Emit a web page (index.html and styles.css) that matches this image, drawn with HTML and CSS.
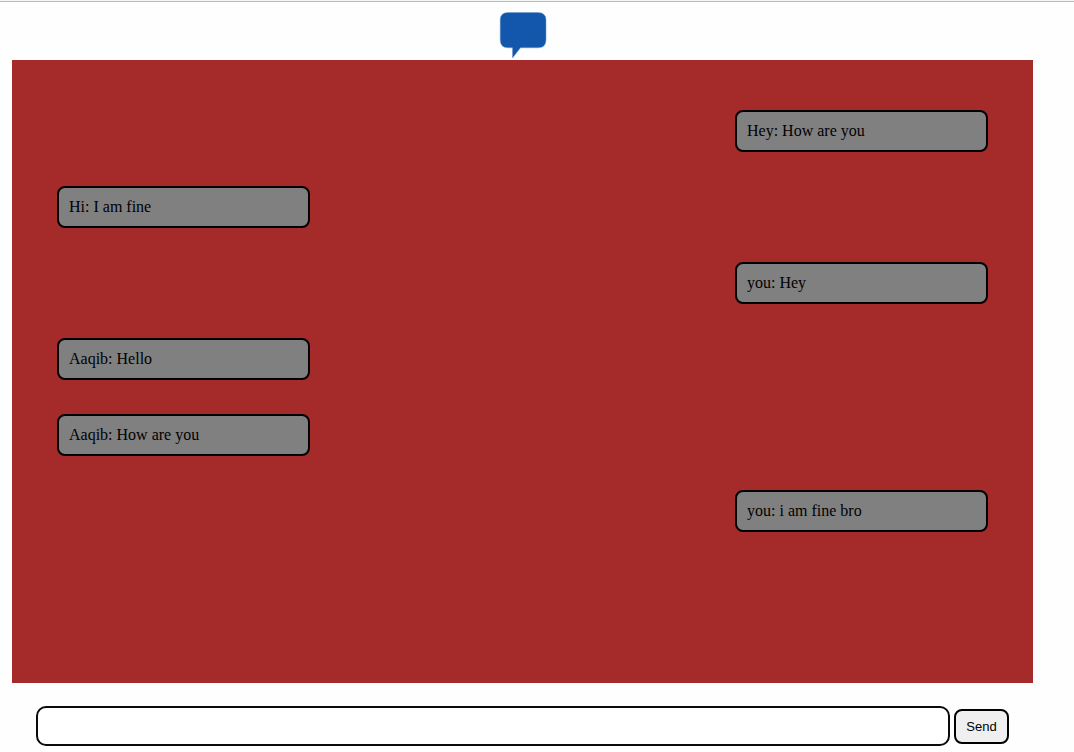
FILE: index.html
```html
<!DOCTYPE html>
<html lang="en">
<head>
<meta charset="utf-8">
<meta name="viewport" content="width=device-width, initial-scale=1">
<title>Chat</title>
<link rel="stylesheet" href="styles.css">
</head>
<body>
<header class="header">
  <svg class="logo" viewBox="0 0 48 48" role="img" aria-label="Chat">
    <path d="M9 2.500H39Q47 2.500 47 10V30Q47 37.800 39 37.800H21.500L13.500 48V37.800H9Q1.200 37.800 1.200 30V10Q1.200 2.500 9 2.500Z" fill="#1257ab" stroke="#6f9bd0" stroke-width=".5"/>
  </svg>
</header>
<main class="chat">
  <div class="message sent">Hey: How are you</div>
  <div class="message">Hi: I am fine</div>
  <div class="message sent">you: Hey</div>
  <div class="message">Aaqib: Hello</div>
  <div class="message">Aaqib: How are you</div>
  <div class="message sent">you: i am fine bro</div>
</main>
<form class="composer">
  <input class="composer-input" type="text" aria-label="Message">
  <button class="send" type="submit">Send</button>
</form>
</body>
</html>
```
FILE: styles.css
```css
* {
  box-sizing: border-box;
}

body {
  display: flex;
  flex-direction: column;
  min-height: 100vh;
  margin: 0;
  border-top: 1px solid #f6f6f6;
  background: #fefefe;
  color: #000;
  font-family: "Liberation Serif", "Times New Roman", serif;
}

.header {
  display: flex;
  justify-content: center;
  height: 59px;
  padding: 8px 41px 0 12px;
  border-top: 1px solid #bbb;
}

.logo {
  width: 48px;
  height: 48px;
}

.chat {
  display: flex;
  flex: 1;
  flex-direction: column;
  align-items: flex-start;
  gap: 34px;
  margin: 0 41px 0 12px;
  padding: 50px 45px;
  background: #a52a2a;
}

.message {
  width: 253px;
  padding: 10px;
  border: 2px solid #000;
  border-radius: 8px;
  background: #808080;
  font-size: 16px;
  line-height: 18px;
}

.sent {
  align-self: flex-end;
}

.composer {
  display: flex;
  align-items: center;
  gap: 4px;
  margin: 0 65px 0 36px;
  padding: 23px 0 6px;
}

.composer-input {
  flex: 1;
  min-width: 0;
  height: 40px;
  padding: 0 10px;
  border: 2px solid #0b0b0b;
  border-radius: 10px;
  background: #fff;
  font: inherit;
}

.send {
  width: 55px;
  height: 35px;
  padding: 0;
  border: 2px solid #000;
  border-radius: 8px;
  background: #efefef;
  color: #000;
  font-family: "Liberation Sans", Arial, sans-serif;
  font-size: 13px;
}
```
